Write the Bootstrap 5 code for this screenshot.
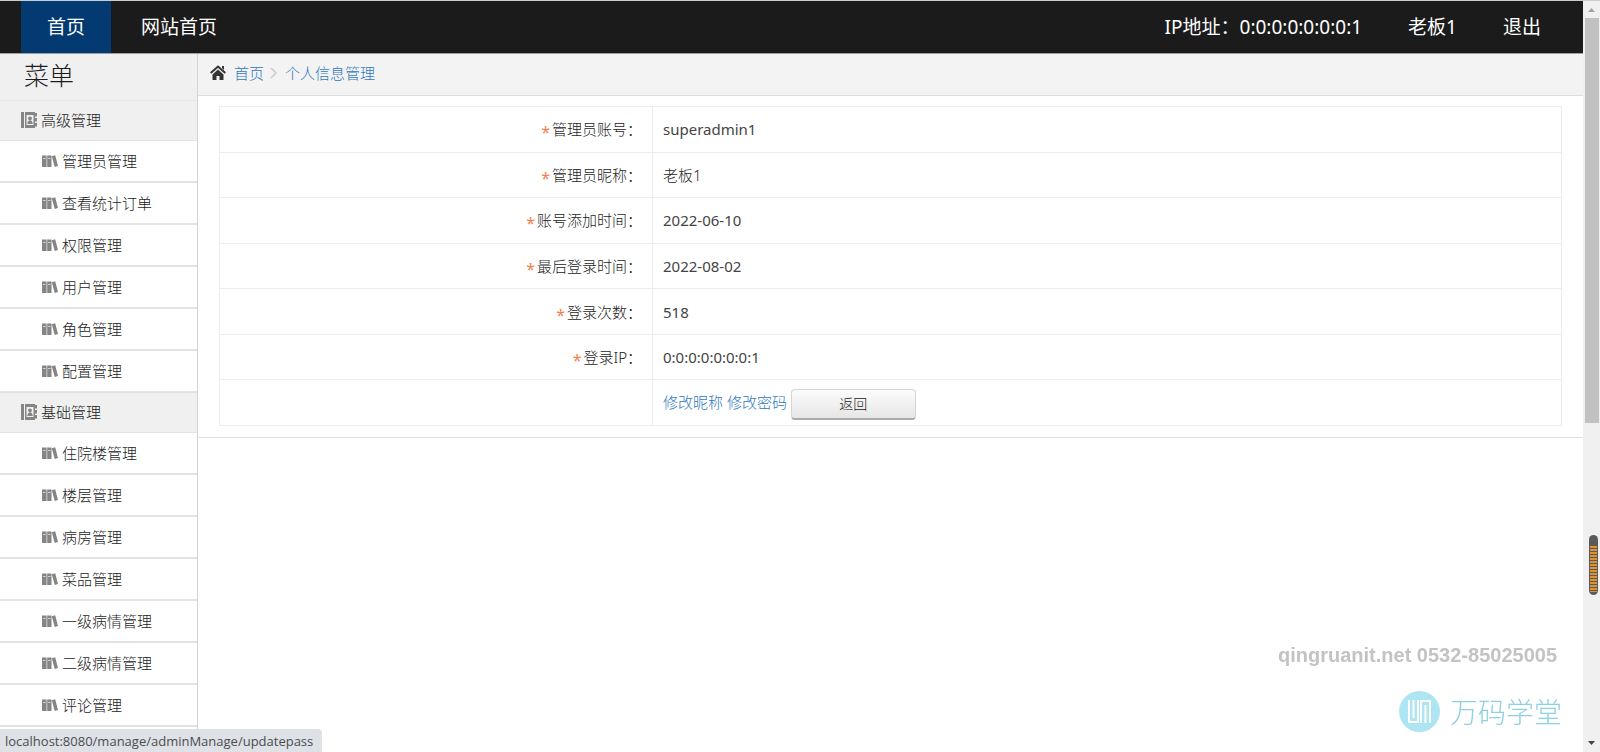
<!DOCTYPE html>
<html lang="zh-CN">
<head>
<meta charset="utf-8">
<meta name="viewport" content="width=device-width, initial-scale=1">
<title>个人信息管理</title>
<link href="https://cdn.jsdelivr.net/npm/bootstrap@5.3.0/dist/css/bootstrap.min.css" rel="stylesheet">
<script src="https://cdn.jsdelivr.net/npm/bootstrap@5.3.0/dist/js/bootstrap.bundle.min.js"></script>
<style>
body{font-family:"Noto Sans","Noto Sans CJK SC",sans-serif;font-size:15px;line-height:20px;color:#1c1c1c;font-weight:300;background:#fff}
a{text-decoration:none;color:#2f78bd}
.topbar{background:#1b1b1b;border-top:1px solid #c6cdcd;border-bottom:1px solid #a0a0a0;height:54px;padding:0 19px 0 21px;font-size:19px;font-weight:400}
.topbar .nav-link{color:#fff;padding:0 26px;line-height:52px}
.topbar .nav-link.active{background:#033a72;margin-right:4px}
.topbar .right-link{padding:0 23px}
.sidebar{width:198px;border-right:1px solid #d4d4d4}
.side-title{background:#f0f0f0;border-bottom:1px solid #e6e6e6;height:47px;line-height:42px;font-size:25px;padding-left:24px;margin:0;font-weight:300}
.side-group{background:#f0f0f0;height:40px;padding:0 0 1px 21px;gap:4px;border-bottom:1px solid #e2e2e2}
.side-item{height:42px;padding-left:42px;gap:4px;border-bottom:2px solid #e3e3e3;color:#1c1c1c}
.crumbs{background:#f3f3f3;border-bottom:1px solid #dedede;height:42px;padding:0 12px 4px}
.content-box{padding:10px 21px 11px 21px;border-bottom:1px solid #e2e2e2}
.info{margin:0;border-collapse:collapse;width:100%;height:320px}
.info th,.info td{border:1px solid #ececec;height:45px;padding:0 10px;font-weight:300;vertical-align:middle}
.info th{width:433px;text-align:right}
.info .val{font-weight:400;color:#444}
.info .actions{padding-top:3px}
.star{color:#f08050;font-size:16px;font-weight:400;line-height:0;vertical-align:-3px;margin-right:2px}
.btn-back{width:125px;height:31px;padding:0;font-size:14px;font-weight:300;color:#222;border:1px solid #d5d5d5;border-bottom:2px solid #aaa;border-radius:4px;background:linear-gradient(#fcfcfc,#e6e6e6)}
.rail{width:17px;background:#f0f0f0;border-top:1px solid #c6cdcd}
.rail-thumb{width:14px;height:405px;background:#c1c1c1}
.pill{right:2px;top:535px}
.brand-mark{right:38px;bottom:20px;color:#8fd0e3;font-size:28px;line-height:40px;gap:10px}
.site-mark{right:43px;bottom:86px;color:#c3c3c3;font:bold 20px/22px "Liberation Sans",sans-serif}
.status{background:#dee1e6;color:#4a4d51;height:23px;line-height:24px;font-family:"Open Sans",sans-serif;font-size:13px;font-weight:400;padding:0 9px 0 5px;border-radius:0 4px 0 0}
</style>
</head>
<body>
<svg class="d-none">
<symbol id="book" viewBox="0 0 16 16"><path fill="#858585" d="M0 0h3v16H0zM4 0h10v16H4z"/><path fill="#858585" d="M14 1h2v3.500h-2zM14 6h2v3.500h-2zM14 11h2v3.500h-2z"/><path fill="#f0f0f0" d="M5.500 3h7v10h-7z"/><circle cx="9" cy="6.300" r="1.900" fill="#858585"/><path fill="#858585" d="M6.300 12c0-5 5.400-5 5.400 0z"/></symbol>
<symbol id="shelf" viewBox="0 0 16 12"><path fill="#858585" d="M0 .5h4.600V12H0zM5.200.5h4.300V12H5.200zM9.800 1.200l3.400-1L16 11l-3.300 1z"/><path stroke="#fff" stroke-width=".6" d="M1 3.500h2.600M6 3.500h2.600"/></symbol>
</svg>
<div class="d-flex vh-100 overflow-hidden">
<div class="d-flex flex-column flex-grow-1">
<nav class="topbar d-flex flex-shrink-0">
<a class="nav-link active" href="#">首页</a>
<a class="nav-link me-auto" href="#">网站首页</a>
<a class="nav-link right-link" href="#">IP地址：0:0:0:0:0:0:0:1</a>
<a class="nav-link right-link" href="#">老板1</a>
<a class="nav-link right-link" href="#">退出</a>
</nav>
<div class="d-flex flex-grow-1 overflow-hidden">
<aside class="sidebar flex-shrink-0">
<h1 class="side-title">菜单</h1>
<div class="side-group d-flex align-items-center"><svg width="16" height="16"><use href="#book"/></svg>高级管理</div>
<a class="side-item d-flex align-items-center" href="#"><svg width="16" height="12"><use href="#shelf"/></svg>管理员管理</a>
<a class="side-item d-flex align-items-center" href="#"><svg width="16" height="12"><use href="#shelf"/></svg>查看统计订单</a>
<a class="side-item d-flex align-items-center" href="#"><svg width="16" height="12"><use href="#shelf"/></svg>权限管理</a>
<a class="side-item d-flex align-items-center" href="#"><svg width="16" height="12"><use href="#shelf"/></svg>用户管理</a>
<a class="side-item d-flex align-items-center" href="#"><svg width="16" height="12"><use href="#shelf"/></svg>角色管理</a>
<a class="side-item d-flex align-items-center" href="#"><svg width="16" height="12"><use href="#shelf"/></svg>配置管理</a>
<div class="side-group d-flex align-items-center"><svg width="16" height="16"><use href="#book"/></svg>基础管理</div>
<a class="side-item d-flex align-items-center" href="#"><svg width="16" height="12"><use href="#shelf"/></svg>住院楼管理</a>
<a class="side-item d-flex align-items-center" href="#"><svg width="16" height="12"><use href="#shelf"/></svg>楼层管理</a>
<a class="side-item d-flex align-items-center" href="#"><svg width="16" height="12"><use href="#shelf"/></svg>病房管理</a>
<a class="side-item d-flex align-items-center" href="#"><svg width="16" height="12"><use href="#shelf"/></svg>菜品管理</a>
<a class="side-item d-flex align-items-center" href="#"><svg width="16" height="12"><use href="#shelf"/></svg>一级病情管理</a>
<a class="side-item d-flex align-items-center" href="#"><svg width="16" height="12"><use href="#shelf"/></svg>二级病情管理</a>
<a class="side-item d-flex align-items-center" href="#"><svg width="16" height="12"><use href="#shelf"/></svg>评论管理</a>
</aside>
<main class="flex-grow-1">
<div class="crumbs d-flex align-items-center">
<svg class="me-2" width="16" height="15" viewBox="0 0 16 15"><path fill="none" stroke="#333" stroke-width="2" d="M.7 8 8 1.500 15.300 8"/><path fill="#333" d="M12 1h2v4l-2-2zM8 4.500l5.500 5V15H9.500v-4h-3v4h-4V9.500z"/></svg>
<a href="#">首页</a>
<svg class="mx-1" width="13" height="12" viewBox="0 0 13 12"><path fill="none" stroke="#ccc" stroke-width="1.500" d="m3 1 5 5-5 5"/></svg>
<a href="#">个人信息管理</a>
</div>
<div class="content-box">
<table class="info">
<tr><th scope="row"><span class="star">*</span>管理员账号：</th><td class="val">superadmin1</td></tr>
<tr><th scope="row"><span class="star">*</span>管理员昵称：</th><td>老板1</td></tr>
<tr><th scope="row"><span class="star">*</span>账号添加时间：</th><td class="val">2022-06-10</td></tr>
<tr><th scope="row"><span class="star">*</span>最后登录时间：</th><td class="val">2022-08-02</td></tr>
<tr><th scope="row"><span class="star">*</span>登录次数：</th><td class="val">518</td></tr>
<tr><th scope="row"><span class="star">*</span>登录IP：</th><td class="val">0:0:0:0:0:0:0:1</td></tr>
<tr><th></th><td class="actions"><a href="#">修改昵称</a> <a href="#">修改密码</a> <button type="button" class="btn btn-back">返回</button></td></tr>
</table>
</div>
</main>
</div>
</div>
<div class="rail d-flex flex-column align-items-center flex-shrink-0">
<svg width="17" height="17" viewBox="0 0 17 17"><path fill="#a3a3a3" d="m5 11 3.500-4L12 11z"/></svg>
<div class="rail-thumb"></div>
<svg class="mt-auto" width="17" height="17" viewBox="0 0 17 17"><path fill="#444" d="m5 6 3.500 4L12 6z"/></svg>
</div>
</div>
<svg class="pill position-fixed" width="9" height="60" viewBox="0 0 9 60"><rect width="9" height="60" rx="4.500" fill="#5a5a5a"/><path stroke="#dd9430" stroke-width="7" stroke-dasharray="2 1" d="M4.500 11v46"/></svg>
<div class="site-mark position-fixed">qingruanit.net 0532-85025005</div>
<div class="brand-mark position-fixed d-flex align-items-center"><svg width="41" height="41" viewBox="0 0 41 41"><circle cx="20.500" cy="20.500" r="20.500" fill="#ade5f3"/><path fill="none" stroke="#fff" stroke-width="2" d="M10 9v22h9V9M14.500 9v18M22 32V10h9v22M26.500 32V14"/></svg>万码学堂</div>
<div class="status position-fixed bottom-0 start-0">localhost:8080/manage/adminManage/updatepass</div>
</body>
</html>
